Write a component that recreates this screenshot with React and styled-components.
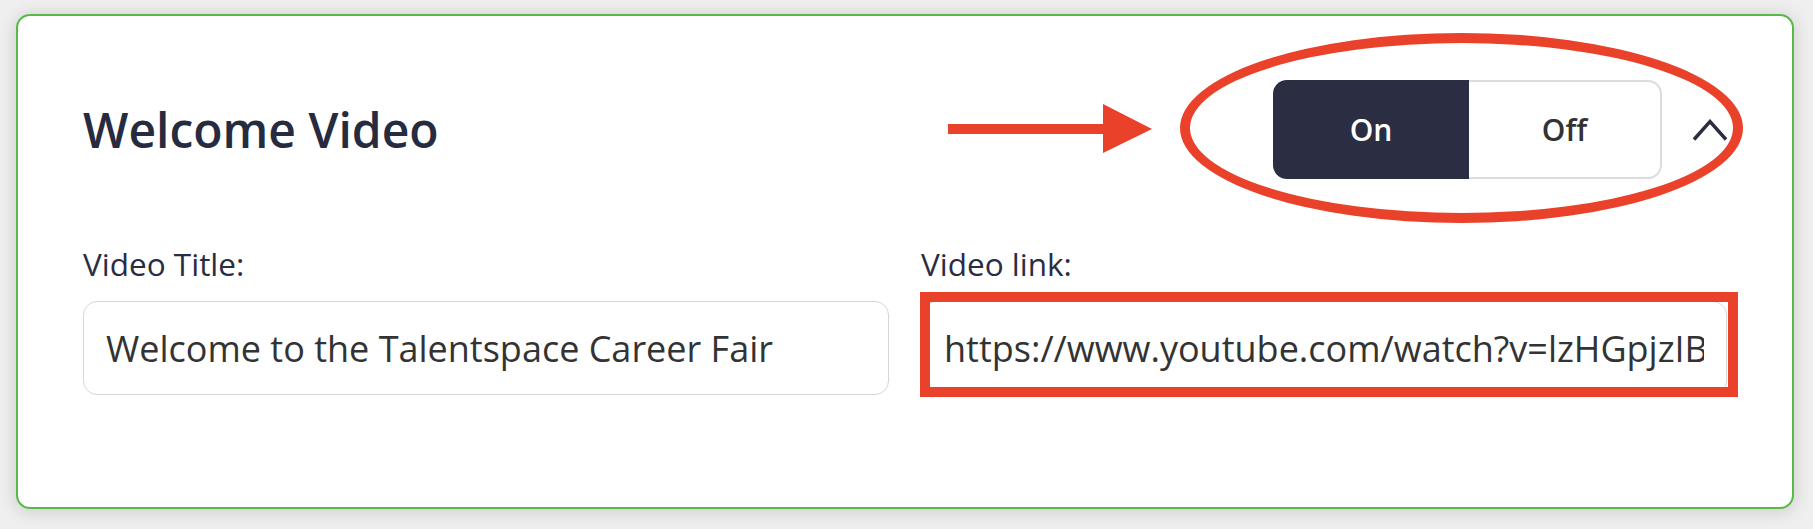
import styled, { createGlobalStyle } from 'styled-components';

const GlobalStyle = createGlobalStyle`
  body {
    margin: 0;
    background: #efefef;
    font-family: "Open Sans", "Liberation Sans", sans-serif;
  }
`;

const Page = styled.div`
  padding: 14px 19px 20px 16px;
`;

const Card = styled.div`
  position: relative;
  background: #fff;
  border: 2px solid #58b947;
  border-radius: 14px;
  padding: 64px 65px 112px 65px;
  box-shadow: 0 2px 18px rgba(0, 0, 0, 0.16);
`;

const Header = styled.div`
  display: flex;
  justify-content: space-between;
  align-items: center;
`;

const Title = styled.h2`
  margin: 0;
  font-size: 48px;
  font-weight: 600;
  line-height: normal;
  color: #272b40;
`;

const Controls = styled.div`
  position: relative;
  display: flex;
  align-items: center;
  gap: 30px;
  margin-right: -1px;
`;

const Toggle = styled.div`
  display: flex;
  height: 99px;
`;

const Segment = styled.button`
  width: ${(p) => (p.$active ? '196px' : '193px')};
  height: 100%;
  font-family: inherit;
  font-size: 30px;
  font-weight: 600;
  cursor: pointer;
  background: ${(p) => (p.$active ? '#2b2e42' : '#fff')};
  color: ${(p) => (p.$active ? '#fff' : '#333')};
  border: ${(p) => (p.$active ? 'none' : '2px solid #dcdcdc')};
  border-left: none;
  border-radius: ${(p) => (p.$active ? '14px 0 0 14px' : '0 14px 14px 0')};
`;

const Chevron = styled.svg`
  width: 36px;
  height: 22px;
  display: block;
`;

const Ring = styled.div`
  position: absolute;
  left: -93px;
  right: -15px;
  top: -47px;
  bottom: -44px;
  border: 10px solid #e9412a;
  border-radius: 50%;
  pointer-events: none;
`;

const Arrow = styled.svg`
  position: absolute;
  left: -325px;
  top: 24px;
  width: 204px;
  height: 49px;
`;

const Fields = styled.div`
  display: grid;
  grid-template-columns: 1fr 1fr;
  gap: 32px;
  margin-top: 63px;
`;

const Field = styled.label`
  display: flex;
  flex-direction: column;
`;

const Label = styled.span`
  font-size: 31.5px;
  line-height: normal;
  color: #2a2d42;
  margin-bottom: 16px;
`;

const InputWrap = styled.div`
  position: relative;
`;

const Input = styled.input`
  box-sizing: border-box;
  width: 100%;
  height: 94px;
  padding: 0 22px;
  border: 1.5px solid #d6d6d6;
  border-radius: 14px;
  font-family: inherit;
  font-size: 36px;
  color: #333;
  background: #fff;
  outline: none;
`;

const Highlight = styled.div`
  position: absolute;
  left: -1px;
  right: -11px;
  top: -9px;
  bottom: -2px;
  border: 10px solid #e9412a;
  pointer-events: none;
`;

const App = () => {
  return (
    <Page>
      <GlobalStyle />
      <Card>
        <Header>
          <Title>Welcome Video</Title>
          <Controls>
            <Arrow viewBox="0 0 204 49">
              <rect x="0" y="20" width="156" height="10" fill="#e9412a" />
              <polygon points="155,0 204,25 155,49" fill="#e9412a" />
            </Arrow>
            <Toggle>
              <Segment $active>On</Segment>
              <Segment>Off</Segment>
            </Toggle>
            <Chevron viewBox="0 0 36 22">
              <polyline
                points="2,20.5 18,2.5 34,20.5"
                fill="none"
                stroke="#2b2e42"
                strokeWidth="3.4"
              />
            </Chevron>
            <Ring />
          </Controls>
        </Header>
        <Fields>
          <Field>
            <Label>Video Title:</Label>
            <InputWrap>
              <Input readOnly value="Welcome to the Talentspace Career Fair" />
            </InputWrap>
          </Field>
          <Field>
            <Label>Video link:</Label>
            <InputWrap>
              <Input readOnly value="https://www.youtube.com/watch?v=lzHGpjzIBxk" />
              <Highlight />
            </InputWrap>
          </Field>
        </Fields>
      </Card>
    </Page>
  );
};

export default App;
